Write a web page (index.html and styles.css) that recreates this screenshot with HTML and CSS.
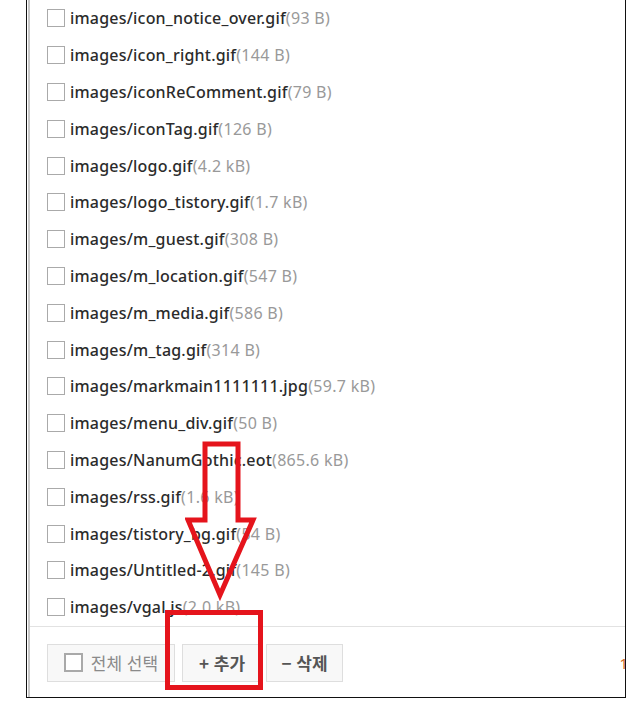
FILE: index.html
```html
<!DOCTYPE html>
<html lang="ko">
<head>
    <meta charset="UTF-8">
    <meta name="viewport" content="width=device-width, initial-scale=1.0">
    <title>파일 목록</title>
    <link rel="stylesheet" href="styles.css">
</head>
<body>
    <div class="frame">
        <div class="panel">
            <ul class="file-list">
                <li><span class="check"></span><span class="name">images/icon_notice_over.gif</span><span class="size">(93 B)</span></li>
                <li><span class="check"></span><span class="name">images/icon_right.gif</span><span class="size">(144 B)</span></li>
                <li><span class="check"></span><span class="name">images/iconReComment.gif</span><span class="size">(79 B)</span></li>
                <li><span class="check"></span><span class="name">images/iconTag.gif</span><span class="size">(126 B)</span></li>
                <li><span class="check"></span><span class="name">images/logo.gif</span><span class="size">(4.2 kB)</span></li>
                <li><span class="check"></span><span class="name">images/logo_tistory.gif</span><span class="size">(1.7 kB)</span></li>
                <li><span class="check"></span><span class="name">images/m_guest.gif</span><span class="size">(308 B)</span></li>
                <li><span class="check"></span><span class="name">images/m_location.gif</span><span class="size">(547 B)</span></li>
                <li><span class="check"></span><span class="name">images/m_media.gif</span><span class="size">(586 B)</span></li>
                <li><span class="check"></span><span class="name">images/m_tag.gif</span><span class="size">(314 B)</span></li>
                <li><span class="check"></span><span class="name">images/markmain1111111.jpg</span><span class="size">(59.7 kB)</span></li>
                <li><span class="check"></span><span class="name">images/menu_div.gif</span><span class="size">(50 B)</span></li>
                <li><span class="check"></span><span class="name">images/NanumGothic.eot</span><span class="size">(865.6 kB)</span></li>
                <li><span class="check"></span><span class="name">images/rss.gif</span><span class="size">(1.6 kB)</span></li>
                <li><span class="check"></span><span class="name">images/tistory_bg.gif</span><span class="size">(54 B)</span></li>
                <li><span class="check"></span><span class="name">images/Untitled-2.gif</span><span class="size">(145 B)</span></li>
                <li><span class="check"></span><span class="name">images/vgal.js</span><span class="size">(2.0 kB)</span></li>
            </ul>

            <div class="toolbar">
                <button class="btn btn-select"><span class="check big"></span>전체 선택</button>
                <button class="btn btn-add">+ 추가</button>
                <button class="btn btn-del">− 삭제</button>
                <span class="page">1</span>
            </div>
        </div>

        <!-- annotation drawn over the screenshot -->
        <svg class="arrow" width="80" height="165" viewBox="0 0 80 165">
            <polygon points="20,3 53,3 53,79 68,79 35,154 3,79 20,79" />
        </svg>
        <div class="highlight"></div>
    </div>
</body>
</html>
```

FILE: styles.css
```css
body {
    margin: 0;
    background-color: white;
    font-family: "Noto Sans", "Noto Sans CJK KR", sans-serif;
}

.frame {
    position: relative;
    width: 598px;
    margin-left: 26px;
    border-left: 1px solid #111;
    border-right: 1px solid #111;
    border-bottom: 1px solid #111;
    overflow: hidden;
}

.panel {
    margin-left: 1px;
    border-left: 2px solid #c8c8c8;
}

.file-list {
    list-style: none;
    margin: 0;
    padding: 0 0 0 17px;
}

.file-list li {
    display: flex;
    align-items: center;
    height: 36.8px;
    font-size: 16px;
    white-space: nowrap;
}

.check {
    display: inline-block;
    box-sizing: border-box;
    width: 18px;
    height: 18px;
    border: 1px solid #aaa;
    background-color: white;
    margin-right: 5px;
}

.name {
    color: #2b2b2b;
    font-weight: 500;
    letter-spacing: 0.2px;
}

.size {
    color: #999;
    letter-spacing: 0.3px;
}

.toolbar {
    display: flex;
    align-items: center;
    border-top: 1px solid #e2e2e2;
    padding: 17px 0 15px 17px;
}

.btn {
    display: flex;
    align-items: center;
    justify-content: center;
    box-sizing: border-box;
    height: 38px;
    padding: 0;
    border: 1px solid #dedede;
    background-color: #f8f8f8;
    font-family: "Noto Sans CJK KR", sans-serif;
    font-size: 17px;
    cursor: pointer;
}

.btn-select {
    width: 128px;
    margin-right: 7px;
    color: #8a8a8a;
}

.check.big {
    width: 19px;
    height: 19px;
    border: 2px solid #a9a9a9;
    margin-right: 8px;
}

.btn-add, .btn-del {
    color: #555;
    font-weight: bold;
}

.btn-add {
    width: 80px;
    margin-right: 4px;
}

.btn-del {
    width: 77px;
}

.page {
    margin-left: auto;
    margin-right: -3px;
    color: #d2691e;
    font-size: 15px;
}

.arrow {
    position: absolute;
    left: 158px;
    top: 441px;
}

.arrow polygon {
    fill: none;
    stroke: #e5141c;
    stroke-width: 5;
    stroke-linejoin: miter;
}

.highlight {
    position: absolute;
    left: 138px;
    top: 610px;
    width: 88px;
    height: 70px;
    border: 5px solid #e5141c;
}
```
